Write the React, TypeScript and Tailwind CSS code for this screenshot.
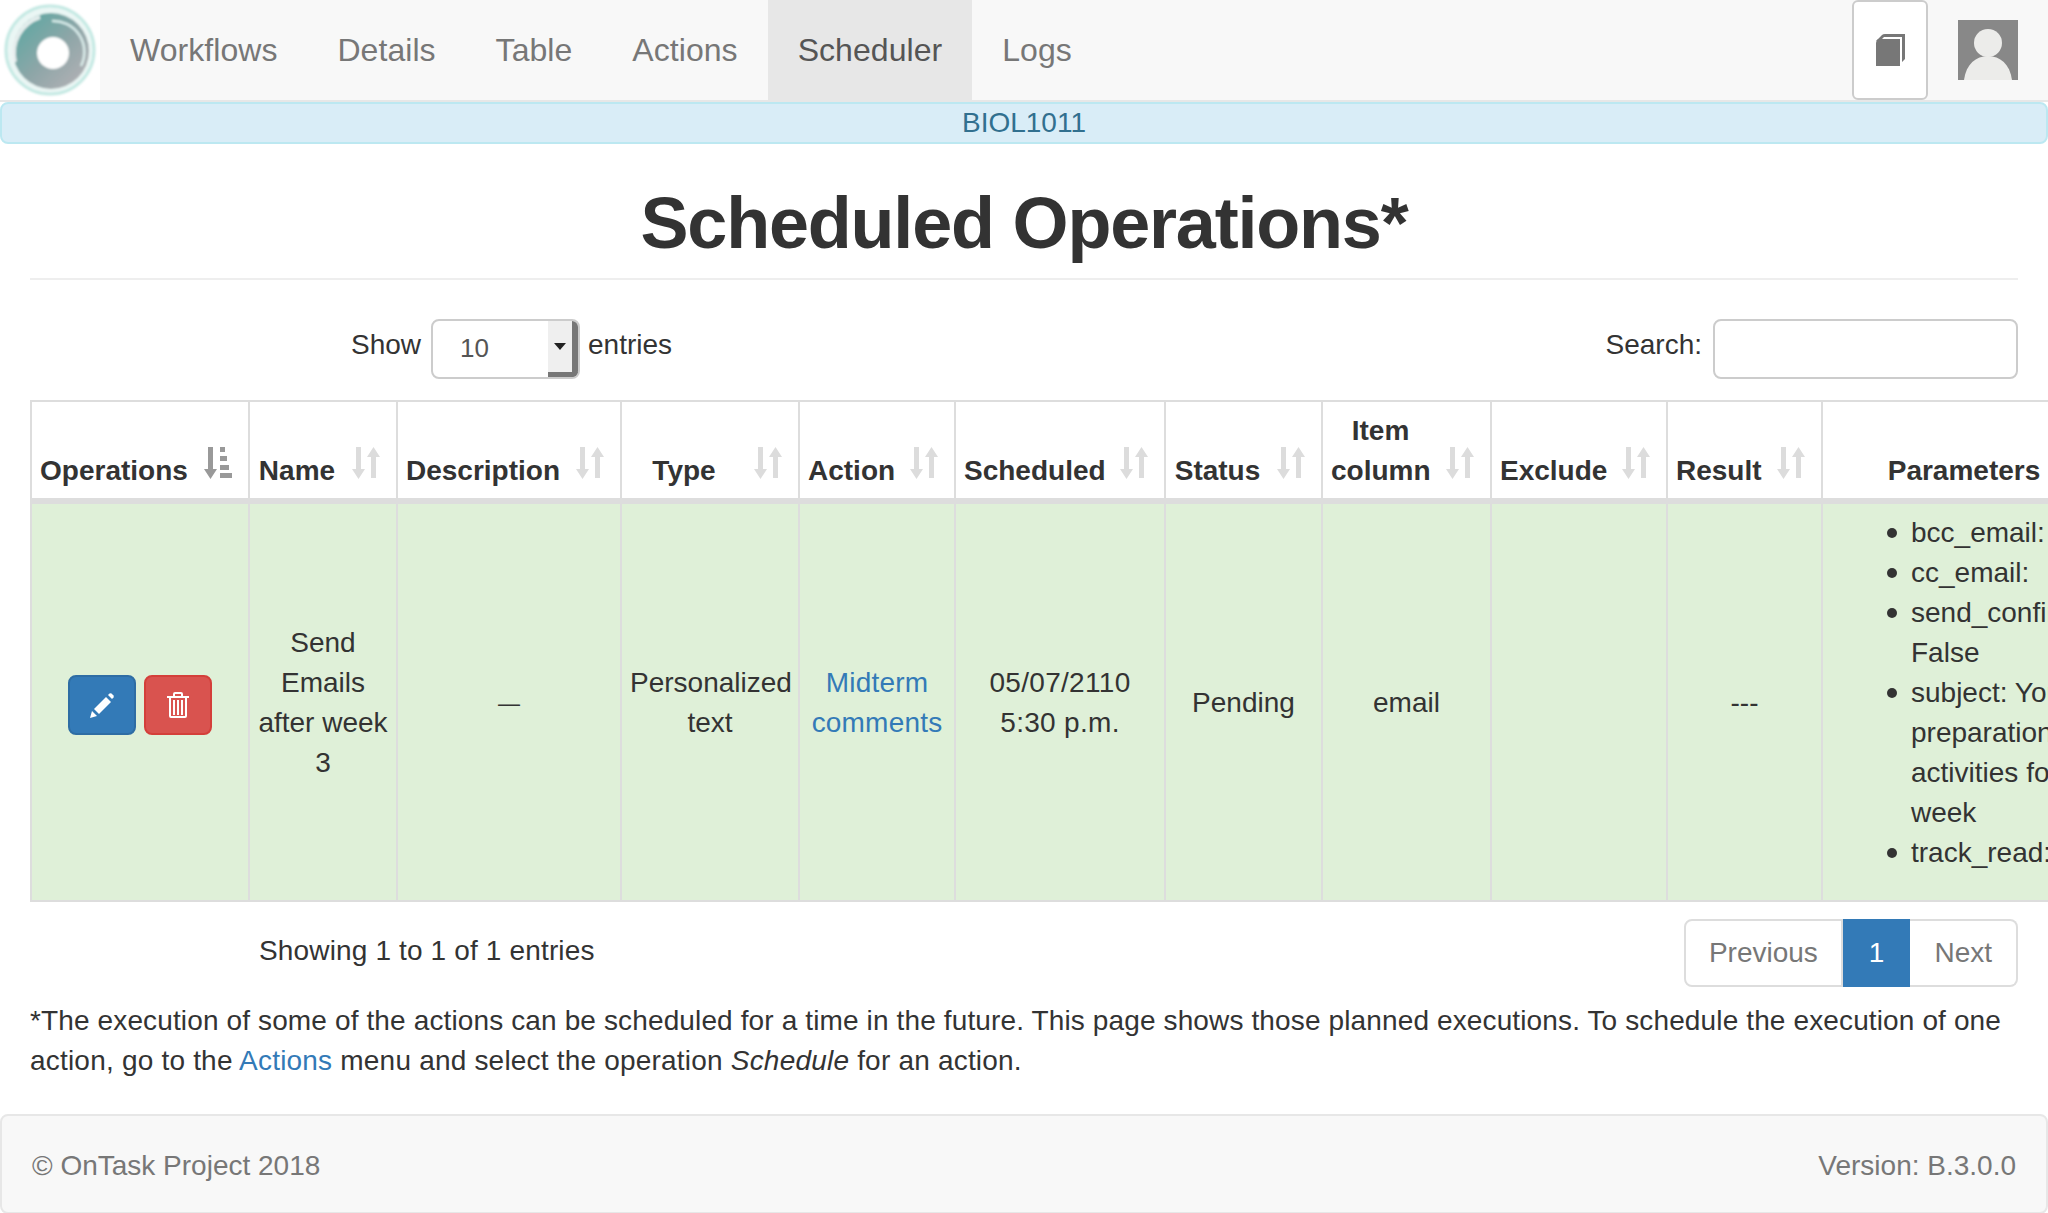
import type { ReactNode } from "react";

const navItems = ["Workflows", "Details", "Table", "Actions", "Scheduler", "Logs"];

function Logo() {
  return (
    <div className="flex h-[100px] w-[100px] shrink-0 items-center justify-center bg-white">
      <svg width="97" height="100" viewBox="0 0 97 100">
        <defs>
          <linearGradient id="ring" x1="0.1" y1="0.1" x2="0.9" y2="0.9">
            <stop offset="0" stopColor="#5fa8a3" />
            <stop offset="0.55" stopColor="#8fa6a8" />
            <stop offset="1" stopColor="#b0b0b4" />
          </linearGradient>
          <filter id="soft">
            <feGaussianBlur stdDeviation="1.2" />
          </filter>
        </defs>
        <g filter="url(#soft)">
          <circle cx="48" cy="50" r="46" fill="#eaf6f4" />
          <circle cx="48" cy="50" r="44" fill="none" stroke="#a5e0d6" strokeWidth="2.5" opacity="0.6" />
          <circle cx="49" cy="51" r="38" fill="url(#ring)" />
          <path d="M13 62 A38 38 0 0 1 38 17" fill="none" stroke="#f1f4f4" strokeWidth="4" opacity="0.9" />
          <path d="M50 21 A31 31 0 0 1 79 66" fill="none" stroke="#dff2ef" strokeWidth="2.5" opacity="0.9" />
          <circle cx="51" cy="53" r="16" fill="#ffffff" />
        </g>
      </svg>
    </div>
  );
}

function BookIcon() {
  return (
    <svg width="29" height="32" viewBox="0 0 29 32" fill="#777777">
      <path d="M0 7 L6 1 Q7 0 9 0 H29 V25 L26 28 V3 H8 L4 7 H0 Z" />
      <path d="M0 9 Q0 7 2 5 H24 V32 H0 Z" />
    </svg>
  );
}

function Avatar() {
  return (
    <svg width="60" height="60" viewBox="0 0 60 60" className="block">
      <rect width="60" height="60" fill="#888888" />
      <circle cx="30" cy="23" r="14" fill="#ececea" />
      <path d="M6 60 C8 44 18 36 30 36 C42 36 52 44 54 60 Z" fill="#ececea" />
    </svg>
  );
}

function SortIcon({ active }: { active?: boolean }) {
  return (
    <svg
      width="28"
      height="32"
      viewBox="0 0 28 32"
      fill={active ? "#999999" : "#dcdcdc"}
      className="absolute bottom-[19px] right-[16px]"
    >
      <path d="M4 0 H9 V22 H13 L6.5 32 L0 22 H4 Z" />
      {active ? (
        <path d="M16 0 H21 V5 H16 Z M16 9 H23 V14 H16 Z M16 18 H25 V23 H16 Z M16 26 H28 V31 H16 Z" />
      ) : (
        <path d="M21.5 0 L28 10 H24 V31 H19 V10 H15 Z" />
      )}
    </svg>
  );
}

function Th({ children, active, sortable = true }: { children: ReactNode; active?: boolean; sortable?: boolean }) {
  return (
    <th
      className={`relative border-2 border-b-[6px] border-[#ddd] pt-[9px] pb-[7px] pl-2 align-bottom text-center font-bold ${
        sortable ? "pr-[60px]" : "pr-[10px]"
      }`}
    >
      {children}
      {sortable && <SortIcon active={active} />}
    </th>
  );
}

function Td({ children }: { children?: ReactNode }) {
  return <td className="border-2 border-[#ddd] px-2 pt-[2px] text-center align-middle">{children}</td>;
}

function PencilIcon() {
  return (
    <svg width="24" height="25" viewBox="0 0 24 25" fill="#ffffff">
      <path d="M0 25 L2 18 L7 23 Z" />
      <path d="M4 16 L16 4 L21 9 L9 21 Z" />
      <path d="M18 2 L19.5 0.5 Q20.5 0 21.5 0.5 L23.5 2.5 Q24 3.5 23.5 4.5 L22 6 Z" />
    </svg>
  );
}

function TrashIcon() {
  return (
    <svg width="22" height="26" viewBox="0 0 22 26" fill="none" stroke="#ffffff">
      <path d="M0 5 H22" strokeWidth="2" />
      <path d="M7 4 V2 Q7 1 8 1 H14 Q15 1 15 2 V4" strokeWidth="2" />
      <path d="M3 6 V24 Q3 25 4 25 H18 Q19 25 19 24 V6" strokeWidth="2" />
      <path d="M7 8 V23 M11 8 V23 M15 8 V23" strokeWidth="2" />
    </svg>
  );
}

function Param({ children }: { children: ReactNode }) {
  return (
    <li className="relative whitespace-pre-line before:absolute before:top-[15px] before:left-[-24px] before:h-[10px] before:w-[10px] before:rounded-full before:bg-[#333]">
      {children}
    </li>
  );
}

export default function App() {
  return (
    <div className="h-[1213px] w-[2048px] overflow-hidden bg-white font-['Liberation_Sans',Arial,sans-serif] text-[28px] leading-[40px] text-[#333]">
      {/* Navbar */}
      <nav className="flex h-[102px] items-stretch border-b-2 border-[#e7e7e7] bg-[#f8f8f8]">
        <Logo />
        <ul className="flex text-[32px] tracking-[0.05px]">
          {navItems.map((item) => (
            <li
              key={item}
              className={`flex items-center px-[30px] ${
                item === "Scheduler" ? "bg-[#e7e7e7] text-[#555]" : "text-[#777]"
              }`}
            >
              {item}
            </li>
          ))}
        </ul>
        <div className="ml-auto flex items-center pr-[30px]">
          <button className="flex h-[100px] w-[76px] items-center justify-center rounded-md border-2 border-[#ccc] bg-white">
            <BookIcon />
          </button>
          <div className="ml-[30px]">
            <Avatar />
          </div>
        </div>
      </nav>

      {/* Workflow name */}
      <div className="h-[42px] rounded-lg border-2 border-[#bce8f1] bg-[#d9edf7] text-center leading-[38px] text-[#31708f]">
        BIOL1011
      </div>

      <div className="px-[30px]">
        <h1 className="mt-[39px] border-b-2 border-[#eee] pb-[15px] text-center text-[72px] leading-[80px] font-bold tracking-[-1.2px]">
          Scheduled Operations*
        </h1>

        {/* Table controls */}
        <div className="mt-[39px] flex h-[60px] items-center justify-between pl-[321px]">
          <div className="flex items-center">
            <span className="mb-[8px]">Show</span>
            <div className="ml-[10px] flex h-[60px] w-[149px] overflow-hidden rounded-lg border-2 border-[#ccc] bg-white">
              <span className="flex-1 pl-[27px] text-[26px] leading-[54px] text-[#555]">10</span>
              <span className="flex w-[30px] items-center justify-center border-r-[6px] border-b-[5px] border-[#777] bg-[#efefef]">
                <span className="h-0 w-0 border-x-[6px] border-t-[7px] border-x-transparent border-t-[#222]" />
              </span>
            </div>
            <span className="mb-[8px] ml-[8px]">entries</span>
          </div>
          <div className="flex items-center">
            <span className="mb-[8px]">Search:</span>
            <div className="ml-[11px] h-[60px] w-[305px] rounded-lg border-2 border-[#ccc] bg-white" />
          </div>
        </div>

        {/* Operations table */}
        <div className="mt-[21px] mr-[-30px] overflow-hidden">
          <table className="w-[2077px] table-fixed border-collapse">
            <colgroup>
              <col className="w-[218px]" />
              <col className="w-[148px]" />
              <col className="w-[224px]" />
              <col className="w-[178px]" />
              <col className="w-[156px]" />
              <col className="w-[210px]" />
              <col className="w-[157px]" />
              <col className="w-[169px]" />
              <col className="w-[176px]" />
              <col className="w-[155px]" />
              <col className="w-[286px]" />
            </colgroup>
            <thead>
              <tr>
                <Th active>Operations</Th>
                <Th>Name</Th>
                <Th>Description</Th>
                <Th>Type</Th>
                <Th>Action</Th>
                <Th>Scheduled</Th>
                <Th>Status</Th>
                <Th>Item column</Th>
                <Th>Exclude</Th>
                <Th>Result</Th>
                <Th sortable={false}>Parameters</Th>
              </tr>
            </thead>
            <tbody>
              <tr className="bg-[#dff0d8]">
                <Td>
                  <div className="flex justify-center gap-[8px] pt-[4px]">
                    <button className="flex h-[60px] w-[68px] items-center justify-center rounded-lg border-2 border-[#2e6da4] bg-[#337ab7]">
                      <PencilIcon />
                    </button>
                    <button className="flex h-[60px] w-[68px] items-center justify-center rounded-lg border-2 border-[#d43f3a] bg-[#d9534f]">
                      <TrashIcon />
                    </button>
                  </div>
                </Td>
                <Td>Send Emails after week 3</Td>
                <Td>
                  <span className="text-[22px]">—</span>
                </Td>
                <Td>Personalized text</Td>
                <Td>
                  <span className="tracking-[0.2px] text-[#337ab7]">Midterm comments</span>
                </Td>
                <Td>
                  <span className="tracking-[0.3px]">
                    05/07/2110
                    <br />
                    5:30 p.m.
                  </span>
                </Td>
                <Td>Pending</Td>
                <Td>email</Td>
                <Td />
                <Td>---</Td>
                <td className="border-2 border-[#ddd] px-2 pt-[9px] pb-[27px] align-top">
                  <ul className="list-none pl-[80px]">
                    <Param>bcc_email:</Param>
                    <Param>cc_email:</Param>
                    <Param>{"send_confirmation:\nFalse"}</Param>
                    <Param>subject: Your preparation activities for week</Param>
                    <Param>track_read:</Param>
                  </ul>
                </td>
              </tr>
            </tbody>
          </table>
        </div>

        {/* Info and pagination */}
        <div className="mt-[17px] flex h-[68px] items-center justify-between pl-[229px]">
          <div className="mb-[5px] tracking-[0.15px]">Showing 1 to 1 of 1 entries</div>
          <div className="flex h-[68px]">
            <span className="flex items-center rounded-l-lg border-2 border-[#ddd] bg-white pr-[23px] pl-[23px] text-[#777]">
              Previous
            </span>
            <span className="flex items-center border-2 border-[#337ab7] bg-[#337ab7] px-[24px] text-white">1</span>
            <span className="flex items-center rounded-r-lg border-2 border-l-0 border-[#ddd] bg-white px-[24px] text-[#777]">
              Next
            </span>
          </div>
        </div>

        <p className="mt-[14px] tracking-[0.13px]">
          *The execution of some of the actions can be scheduled for a time in the future. This page shows those
          planned executions. To schedule the execution of one{" "}
          <span className="tracking-[0.2px]">
            action, go to the <span className="text-[#337ab7]">Actions</span> menu and select the operation{" "}
            <em>Schedule</em> for an action.
          </span>
        </p>
      </div>

      {/* Footer */}
      <footer className="mt-[33px] flex h-[100px] items-center justify-between rounded-lg border-2 border-[#e7e7e7] bg-[#f8f8f8] px-[30px] pt-[3px] text-[#777]">
        <span>© OnTask Project 2018</span>
        <span>Version: B.3.0.0</span>
      </footer>
    </div>
  );
}
